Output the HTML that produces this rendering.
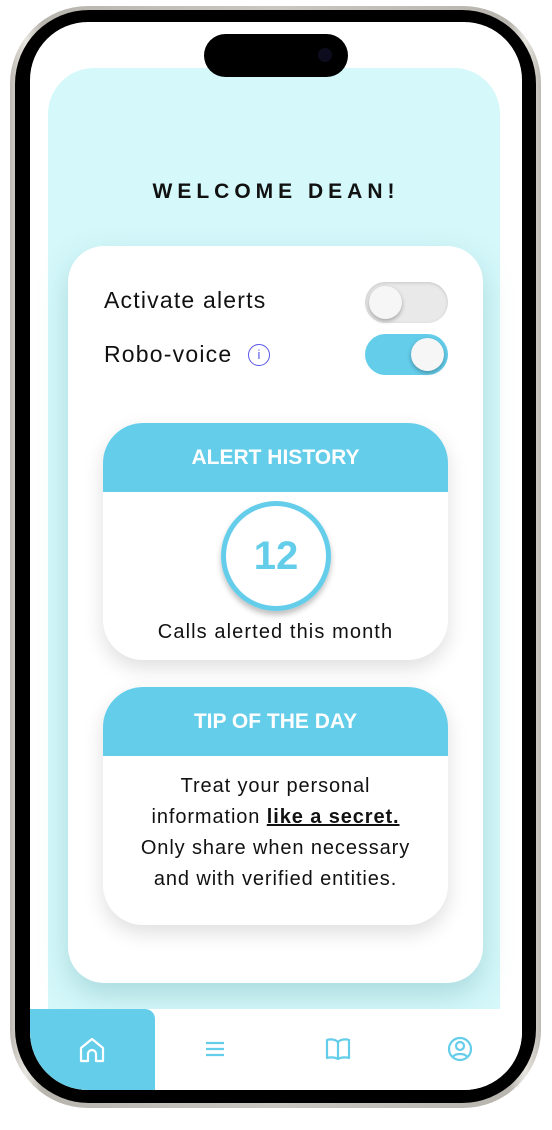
<!DOCTYPE html>
<html><head><style>
*{margin:0;padding:0;box-sizing:border-box}
body{width:552px;height:1130px;background:#fff;position:relative;overflow:hidden;font-family:"Liberation Sans",sans-serif}
.abs{position:absolute}
.bezel{left:10px;top:6px;width:531px;height:1102px;border-radius:78px;background:linear-gradient(90deg,#bdbab3,#e8e6e0 3%,#b8b5ae 6%,#c9c6bf 50%,#b8b5ae 94%,#e8e6e0 97%,#bdbab3)}
.black{left:15px;top:10px;width:521px;height:1093px;border-radius:74px;background:#000}
.screen{left:30px;top:22px;width:492px;height:1068px;border-radius:58px;background:#fff;overflow:hidden}
.island{left:204px;top:34px;width:144px;height:43px;border-radius:22px;background:#000}
.panel{left:18px;top:46px;width:452px;height:960px;border-radius:46px 46px 0 0;background:#d5f8fa}
.card{left:38px;top:224px;width:415px;height:737px;border-radius:36px;background:#fff;box-shadow:0 12px 28px rgba(90,160,170,.35)}
.t{font-family:"Liberation Sans",sans-serif;color:#111}
.tog{width:83px;height:41px;border-radius:21px}
.knob{width:33px;height:33px;border-radius:50%;background:#f6f6f6;box-shadow:0 2px 4px rgba(0,0,0,.3);top:4px}
.sub{left:73px;width:345px;border-radius:40px;background:#fff;box-shadow:0 8px 20px rgba(0,0,0,.13);overflow:hidden}
.hdr{height:69px;background:#64cdea;color:#fff;font-weight:bold;font-size:21px;text-align:center;line-height:70px}
.nav{left:0;top:987px;width:492px;height:81px;background:#fff}
</style></head><body>
<div class="abs bezel"></div>
<div class="abs black"></div>
<div class="abs screen">
 <div class="abs panel"></div>
 <div class="abs t" style="left:0;width:492px;top:158px;text-align:center;font-weight:bold;font-size:21px;letter-spacing:5px">WELCOME DEAN!</div>
 <div class="abs card">
  <div class="abs t" style="left:36px;top:41px;font-size:23px;letter-spacing:1.2px">Activate alerts</div>
  <div class="abs tog" style="left:297px;top:36px;background:#e9e9e9;box-shadow:inset 0 1px 3px rgba(0,0,0,.15)"><div class="abs knob" style="left:4px"></div></div>
  <div class="abs t" style="left:36px;top:95px;font-size:23px;letter-spacing:1.2px">Robo-voice</div>
  <div class="abs" style="left:180px;top:98px;width:22px;height:22px;border:1.5px solid #5a55e8;border-radius:50%;color:#5a55e8;font-size:13px;text-align:center;line-height:19px">i</div>
  <div class="abs tog" style="left:297px;top:88px;background:#64cdea"><div class="abs knob" style="left:46px"></div></div>
 </div>
 <div class="abs sub" style="top:401px;height:237px">
  <div class="hdr">ALERT HISTORY</div>
  <div class="abs" style="left:118px;top:78px;width:110px;height:110px;border-radius:50%;border:5px solid #64cdea;box-shadow:0 4px 6px rgba(0,0,0,.25);color:#64cdea;font-weight:bold;font-size:40px;text-align:center;line-height:100px">12</div>
  <div class="abs t" style="left:0;width:345px;top:198px;text-align:center;font-size:20px;letter-spacing:1.1px">Calls alerted this month</div>
 </div>
 <div class="abs sub" style="top:665px;height:238px">
  <div class="hdr">TIP OF THE DAY</div>
  <div class="abs t" style="left:0;width:345px;top:84px;text-align:center;font-size:20px;letter-spacing:0.9px;line-height:31px">Treat your personal<br>information <b style="text-decoration:underline">like a secret.</b><br>Only share when necessary<br>and with verified entities.</div>
 </div>
 <div class="abs nav">
  <div class="abs" style="left:0;top:0;width:125px;height:81px;background:#64cdea;border-radius:0 10px 0 0"></div>
  <svg class="abs" style="left:49px;top:28px" width="26" height="26" viewBox="0 0 26 26" fill="none" stroke="#fff" stroke-width="2.2" stroke-linejoin="round"><path d="M2 24V11L13 2L24 11V24H17V17A4 4 0 0 0 9 17V24Z"/></svg>
  <svg class="abs" style="left:174px;top:30px" width="22" height="20" viewBox="0 0 22 20" stroke="#64cdea" stroke-width="2.2"><path d="M2 4H20M2 10H20M2 16H20"/></svg>
  <svg class="abs" style="left:295px;top:28px" width="26" height="24" viewBox="0 0 26 24" fill="none" stroke="#64cdea" stroke-width="2.2" stroke-linejoin="round"><path d="M13 5C10 2 5 2 2 3V21C5 20 10 20 13 22C16 20 21 20 24 21V3C21 2 16 2 13 5ZM13 5V22"/></svg>
  <svg class="abs" style="left:417px;top:27px" width="26" height="26" viewBox="0 0 26 26" fill="none" stroke="#64cdea" stroke-width="2.2"><circle cx="13" cy="13" r="11"/><circle cx="13" cy="10" r="4"/><path d="M6 21C8 17 18 17 20 21"/></svg>
 </div>
</div>
<div class="abs island"><div class="abs" style="left:114px;top:14px;width:14px;height:14px;border-radius:50%;background:#0c0c1e"></div></div>
</body></html>
